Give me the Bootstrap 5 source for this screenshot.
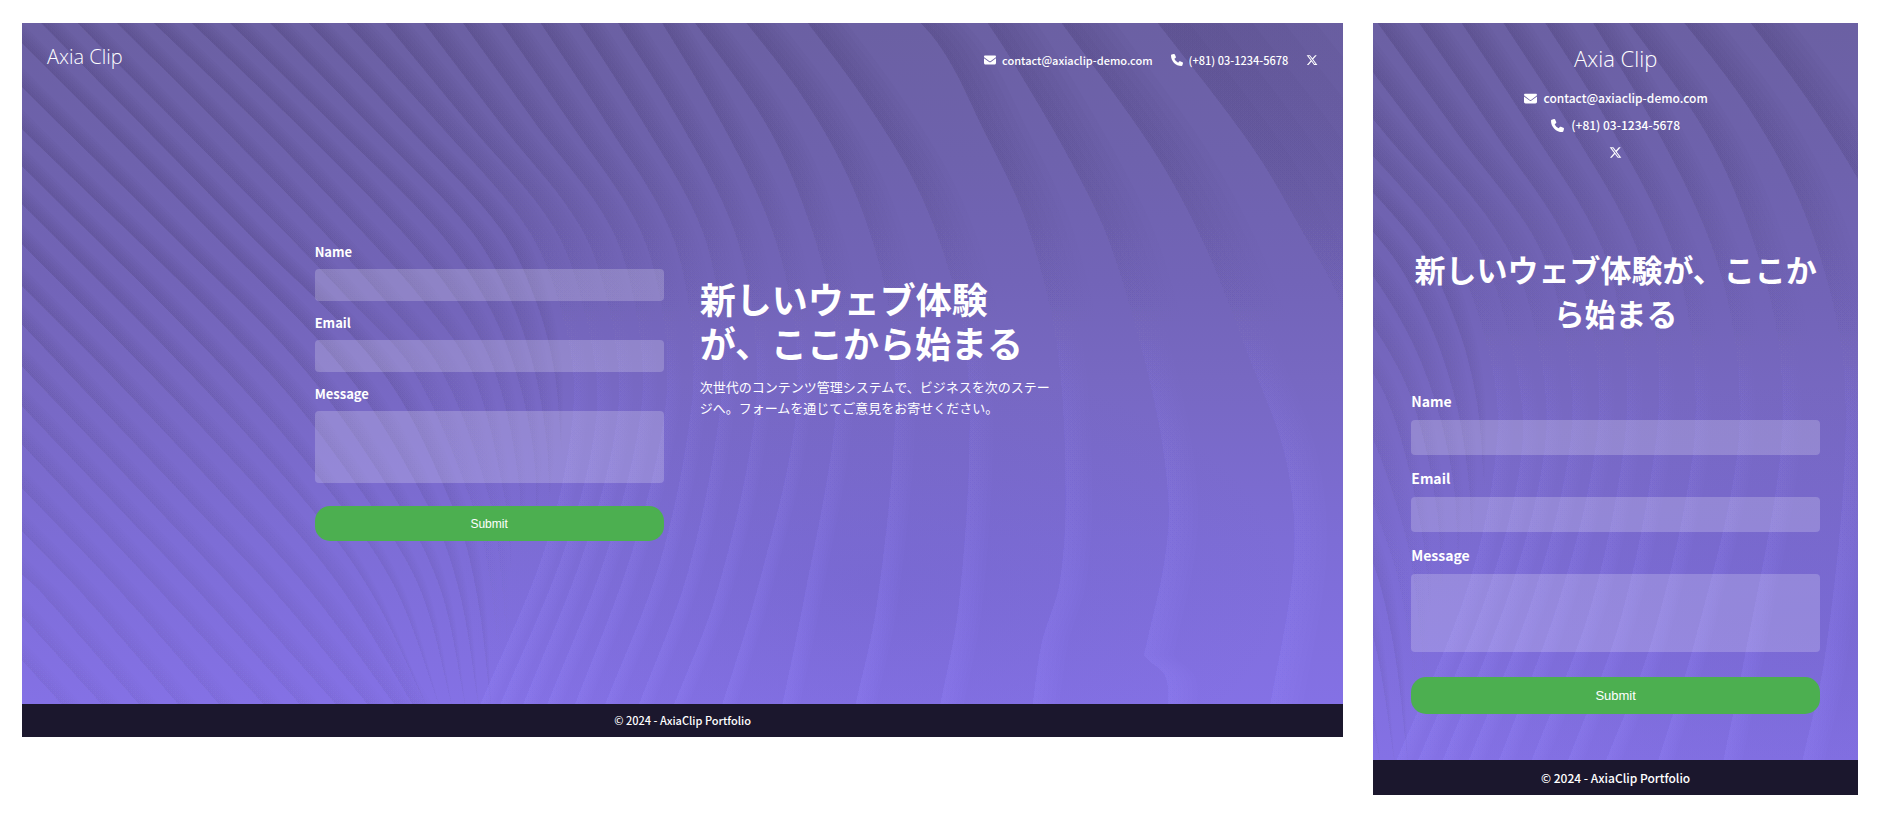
<!DOCTYPE html>
<html lang="ja">
<head>
<meta charset="utf-8">
<meta name="viewport" content="width=device-width, initial-scale=1">
<title>Axia Clip</title>
<link href="https://cdn.jsdelivr.net/npm/bootstrap@5.3.0/dist/css/bootstrap.min.css" rel="stylesheet">
<style>
  body { background: #fff; font-family: "Noto Sans CJK JP", sans-serif; font-size: 12px; color: #fff; }
  .boards { padding: 23px 22px; gap: 30px; }
  .board { min-width: 0; line-height: 18px; }
  .board-wide { flex: 1322 1 0; font-size: 11px; }
  .board-slim { flex: 485 1 0; font-size: 12px; }
  .stage { background: linear-gradient(#6b60a3 0%, #6e62ad 20%, #7264b8 38%, #7768c2 52%, #7d6dd6 76%, #8471e5 100%); isolation: isolate; }
  .waves { position: absolute; inset: 0; width: 100%; height: 100%; z-index: -1; }
  .logo { font-family: "Open Sans", sans-serif; font-weight: 300; font-size: 20px; line-height: 28px; color: #fff; text-decoration: none; }
  .contacts, .bottom-bar { font-weight: 500; }
  .contact-link { display: flex; align-items: center; gap: 6px; min-height: 18px; color: #fff; text-decoration: none; }
  .contact-link svg { width: 12px; height: 12px; fill: #fff; }
  .board-wide .top-bar { padding: 20px 25px 0; }
  .board-wide .contacts { gap: 18px; padding-top: 8px; }
  .board-wide .hero { width: 736px; max-width: 100%; margin: 0 auto; padding: 170px 0 163px; display: grid; grid-template-columns: 349fr 351fr; gap: 36px; }
  .hero-title { font-weight: 700; font-size: 36px; line-height: 44px; margin: 0; }
  .board-wide .pitch { padding-top: 35px; }
  .pitch p { font-size: 13px; line-height: 21px; margin: 12px 0 0; }
  .field-label { display: block; font-weight: 700; font-size: 13px; line-height: 21px; margin-bottom: 7px; }
  .field-box { height: 32px; border: 0; border-radius: 4px; background: rgba(255,255,255,.2); color: #fff; resize: none; margin-bottom: 11px; }
  .field-box:focus { background: rgba(255,255,255,.3); color: #fff; }
  textarea.field-box { height: 72px; }
  .send { margin-top: 12px; height: 35px; padding: 0; border: 0; border-radius: 15px; background: #4caf50; color: #fff; font-family: "Liberation Sans", sans-serif; font-size: 12px; }
  .send:hover { background: #43a047; color: #fff; }
  .bottom-bar { background: #1b172d; padding: 7px 0 8px; }

  .board-slim .logo { font-size: 22px; }
  .board-slim .top-bar { padding-top: 21px; }
  .board-slim .contacts { gap: 9px; padding-top: 17px; }
  .board-slim .contact-link { gap: 7px; }
  .board-slim .contact-link svg { width: 13px; height: 13px; }
  .board-slim .hero { padding: 86px 38px 46px; }
  .board-slim .hero-title { font-size: 31px; }
  .board-slim form { padding-top: 54px; }
  .board-slim .field-label { font-size: 14px; line-height: 24px; margin-bottom: 7px; }
  .board-slim .field-box { height: 35px; margin-bottom: 11px; }
  .board-slim textarea.field-box { height: 78px; }
  .board-slim .send { height: 37px; margin-top: 14px; font-size: 13px; }
  .board-slim .bottom-bar { padding: 9px 0 8px; }
</style>
</head>
<body>
<svg width="0" height="0" class="d-none" aria-hidden="true">
  <symbol id="ico-mail" viewBox="0 0 512 512"><path d="M48 64C21.5 64 0 85.5 0 112c0 15.1 7.1 29.3 19.2 38.4L236.8 313.6c11.4 8.5 27 8.5 38.4 0L492.8 150.4c12.1-9.1 19.2-23.3 19.2-38.4c0-26.5-21.5-48-48-48L48 64zM0 176L0 384c0 35.3 28.7 64 64 64l384 0c35.3 0 64-28.7 64-64l0-208L294.4 339.2c-22.8 17.1-54 17.1-76.8 0L0 176z"/></symbol>
  <symbol id="ico-phone" viewBox="0 0 512 512"><path d="M164.9 24.6c-7.7-18.6-28-28.5-47.4-23.2l-88 24C12.1 30.2 0 46 0 64C0 311.4 200.6 512 448 512c18 0 33.8-12.1 38.6-29.5l24-88c5.3-19.4-4.6-39.7-23.2-47.4l-96-40c-16.3-6.8-35.2-2.1-46.3 11.6L304.7 368C234.3 334.7 177.3 277.7 144 207.3L193.3 167c13.7-11.2 18.4-30 11.6-46.3l-40-96z"/></symbol>
  <symbol id="ico-x" viewBox="0 0 512 512"><path d="M389.2 48h70.6L305.6 224.2 487 464H345L233.7 318.6 106.5 464H35.8L200.7 275.5 26.8 48H172.4L272.9 180.9 389.2 48zM364.4 421.8h39.1L151.1 88h-42L364.4 421.8z"/></symbol>
</svg>

<div class="boards d-flex align-items-start">
  <section class="board board-wide">
    <div class="stage position-relative">
      <svg class="waves" viewBox="0 0 1322 681" preserveAspectRatio="xMidYMid slice" aria-hidden="true"></svg>
      <header class="top-bar d-flex justify-content-between align-items-start">
        <a class="logo" href="#">Axia Clip</a>
        <nav class="contacts d-flex" aria-label="Contact">
          <a class="contact-link" href="mailto:contact@axiaclip-demo.com"><svg><use href="#ico-mail"/></svg><span>contact@axiaclip-demo.com</span></a>
          <a class="contact-link" href="tel:+810312345678"><svg><use href="#ico-phone"/></svg><span>(+81) 03-1234-5678</span></a>
          <a class="contact-link" href="#" aria-label="X"><svg><use href="#ico-x"/></svg></a>
        </nav>
      </header>
      <main class="hero">
        <form>
          <label class="field-label" for="name-a">Name</label>
          <input class="form-control field-box" id="name-a" type="text">
          <label class="field-label" for="email-a">Email</label>
          <input class="form-control field-box" id="email-a" type="email">
          <label class="field-label" for="message-a">Message</label>
          <textarea class="form-control field-box" id="message-a"></textarea>
          <button class="btn send w-100" type="button">Submit</button>
        </form>
        <div class="pitch">
          <h1 class="hero-title">新しいウェブ体験が、ここから始まる</h1>
          <p>次世代のコンテンツ管理システムで、ビジネスを次のステージへ。フォームを通じてご意見をお寄せください。</p>
        </div>
      </main>
    </div>
    <footer class="bottom-bar text-center">© 2024 - AxiaClip Portfolio</footer>
  </section>

  <section class="board board-slim">
    <div class="stage position-relative">
      <svg class="waves" viewBox="0 0 1322 681" preserveAspectRatio="xMidYMid slice" aria-hidden="true"></svg>
      <header class="top-bar d-flex flex-column align-items-center">
        <a class="logo" href="#">Axia Clip</a>
        <nav class="contacts d-flex flex-column align-items-center" aria-label="Contact">
          <a class="contact-link" href="mailto:contact@axiaclip-demo.com"><svg><use href="#ico-mail"/></svg><span>contact@axiaclip-demo.com</span></a>
          <a class="contact-link" href="tel:+810312345678"><svg><use href="#ico-phone"/></svg><span>(+81) 03-1234-5678</span></a>
          <a class="contact-link" href="#" aria-label="X"><svg><use href="#ico-x"/></svg></a>
        </nav>
      </header>
      <main class="hero">
        <h1 class="hero-title text-center">新しいウェブ体験が、ここから始まる</h1>
        <form>
          <label class="field-label" for="name-b">Name</label>
          <input class="form-control field-box" id="name-b" type="text">
          <label class="field-label" for="email-b">Email</label>
          <input class="form-control field-box" id="email-b" type="email">
          <label class="field-label" for="message-b">Message</label>
          <textarea class="form-control field-box" id="message-b"></textarea>
          <button class="btn send w-100" type="button">Submit</button>
        </form>
      </main>
    </div>
    <footer class="bottom-bar text-center">© 2024 - AxiaClip Portfolio</footer>
  </section>
</div>

<script src="https://cdn.jsdelivr.net/npm/bootstrap@5.3.0/dist/js/bootstrap.bundle.min.js"></script>
<script>
// Folds that run off to the lower right: x,y pairs along each crease.
const slopes = [
  [-22,615, 0,637, 48,690], [-22,571, 0,593, 88,690], [-22,529, 0,551, 20,570, 125,690],
  [-22,486, 0,508, 60,570, 164,690], [-22,443, 0,465, 100,570, 205,690],
  [-22,399, 0,421, 140,570, 250,690], [-22,361, 0,383, 98,486, 178,570, 286,690],
  [-22,321, 0,343, 136,486, 215,570, 322,690], [-22,279, 0,301, 175,486, 254,570, 353,690],
  [-22,241, 0,263, 85,348, 215,486, 290,570, 379,690],
  [-22,199, 0,221, 126,348, 255,486, 323,570, 396,690],
  [-22,159, 0,181, 166,348, 290,486, 350,570, 408,690],
  [-22,121, 0,143, 205,348, 322,486, 376,570, 420,690],
  [-22,84, 0,106, 246,348, 352,486, 400,570, 432,690],
  [-22,42, 0,64, 144,206, 284,348, 380,486, 420,570, 445,690],
  [-22,-2, 0,20, 186,206, 323,348, 408,486, 438,570, 458,690],
  [-4,-24, 222,206, 360,348, 432,486, 455,570, 470,690],
  [32,-24, 260,206, 328,277, 392,348, 452,486, 470,570, 480,690],
  [71,-24, 198,102, 299,206, 363,277, 420,348, 466,470, 480,560, 486,650],
  [107,-24, 238,102, 338,206, 401,277, 450,348, 482,470, 490,560],
  [145,-24, 276,102, 378,206, 435,277, 473,348, 496,450, 500,540],
  [184,-24, 312,102, 415,206, 464,277, 494,348, 512,430, 515,510],
  [225,-24, 348,102, 448,206, 489,277, 513,348, 525,420, 528,480],
  [264,-24, 384,102, 479,206, 515,280, 533,350, 540,430]
];
// Folds that bend back towards the lower left.
const bends = [
  [303,-24, 418,102, 506,206, 540,290, 552,380, 525,520, 455,690],
  [344,-24, 448,102, 533,206, 565,300, 575,390, 545,520, 475,690],
  [384,-24, 480,102, 560,206, 590,300, 596,390, 565,520, 498,690],
  [424,-24, 515,102, 590,206, 616,300, 619,390, 585,530, 522,690],
  [463,-24, 550,102, 618,206, 642,300, 643,390, 610,530, 550,690],
  [503,-24, 586,102, 648,206, 669,300, 669,390, 638,540, 580,690],
  [542,-24, 623,102, 680,206, 699,300, 698,390, 666,550, 614,690],
  [581,-24, 660,102, 712,206, 732,300, 732,403, 695,570, 649,690],
  [626,-24, 701,102, 750,206, 772,300, 773,403, 735,569, 698,690],
  [656,-24, 745,102, 790,206, 812,300, 813,403, 781,583, 759,690],
  [706,-24, 785,80, 836,176, 868,290, 873,403, 855,583, 832,690],
  [768,-24, 845,80, 901,176, 938,290, 948,403, 937,583, 917,690],
  [824,-24, 899,0, 968,119, 1008,209, 1036,330, 1044,469, 1038,560, 1020,620, 1010,690],
  [945,-24, 966,0, 1010,70, 1050,140, 1085,212, 1115,309, 1137,400, 1147,483, 1142,543, 1124,625, 1123,633, 1144,654, 1146,690],
  [1024,-24, 1040,0, 1129,123, 1182,220, 1225,329, 1260,420, 1272,490, 1270,560, 1247,690],
  [1115,-24, 1136,0, 1232,126, 1285,216, 1317,276, 1345,380]
];

function pts(a) { const o = []; for (let i = 0; i < a.length; i += 2) o.push([a[i], a[i + 1]]); return o; }
function curve(p) {
  let d = '';
  for (let i = 0; i < p.length - 1; i++) {
    const a = p[i - 1] || p[i], b = p[i], c = p[i + 1], e = p[i + 2] || c;
    // Tension limits overshoot where a short segment meets a long one.
    const len = Math.hypot(c[0] - b[0], c[1] - b[1]) / 3;
    const t1 = Math.hypot(c[0] - a[0], c[1] - a[1]) || 1, t2 = Math.hypot(e[0] - b[0], e[1] - b[1]) || 1;
    d += `C${b[0] + (c[0] - a[0]) / t1 * len} ${b[1] + (c[1] - a[1]) / t1 * len} ${c[0] - (e[0] - b[0]) / t2 * len} ${c[1] - (e[1] - b[1]) / t2 * len} ${c[0]} ${c[1]}`;
  }
  return d;
}
// A band of width w to the right of a crease; creases that meet near the middle narrow as they close up.
function band(a, w, taper) {
  const p = pts(a), last = p.length - 1;
  const k = i => !taper ? 1 : i === last ? 0 : i === last - 1 ? .4 : i === last - 2 ? .7 : 1;
  const q = p.map(([x, y], i) => [x + w * k(i), y]).reverse();
  return `M${p[0]}${curve(p)}L${q[0]}${curve(q)}Z`;
}
const steps = 6;
document.querySelectorAll('.waves').forEach((svg, n) => {
  const grad = (id, colour, stops) => `<linearGradient id="${id}${n}" gradientUnits="userSpaceOnUse" x1="0" y1="0" x2="0" y2="681">` +
    stops.map(([o, a]) => `<stop offset="${o}" stop-color="${colour}" stop-opacity="${a}"/>`).join('') + '</linearGradient>';
  let out = '<defs>' + grad('slope', '#45396f', [[0, .06], [.35, .05], [.6, .026], [1, .014]]) +
    grad('merge', '#45396f', [[0, .06], [.25, .045], [.5, .02], [.75, .006], [1, 0]]) +
    grad('shade', '#45396f', [[0, .06], [.2, .04], [.36, .012], [.46, 0]]) +
    grad('glow', '#9484ff', [[.4, 0], [.65, .03], [1, .055]]) +
    `<radialGradient id="dusk${n}"><stop offset="0" stop-color="#5b4fae" stop-opacity=".16"/><stop offset="1" stop-color="#5b4fae" stop-opacity="0"/></radialGradient></defs>`;
  const add = (a, w, fill, taper) => { for (let k = 1; k <= steps; k++) out += `<path fill="url(#${fill}${n})" d="${band(a, w * k / steps, taper)}"/>`; };
  out += `<ellipse fill="url(#dusk${n})" cx="850" cy="560" rx="420" ry="230"/>`;
  slopes.forEach((a, i) => add(a, 20, i > 16 ? 'merge' : 'slope', i > 10));
  bends.forEach((a, i) => {
    const w = i < 8 ? 24 : 24 + (i - 8) * 5;
    add(a, i === bends.length - 1 ? 190 : w, 'shade');
    add(a, w * .6, 'glow');
  });
  svg.innerHTML = out;
});
</script>
</body>
</html>
